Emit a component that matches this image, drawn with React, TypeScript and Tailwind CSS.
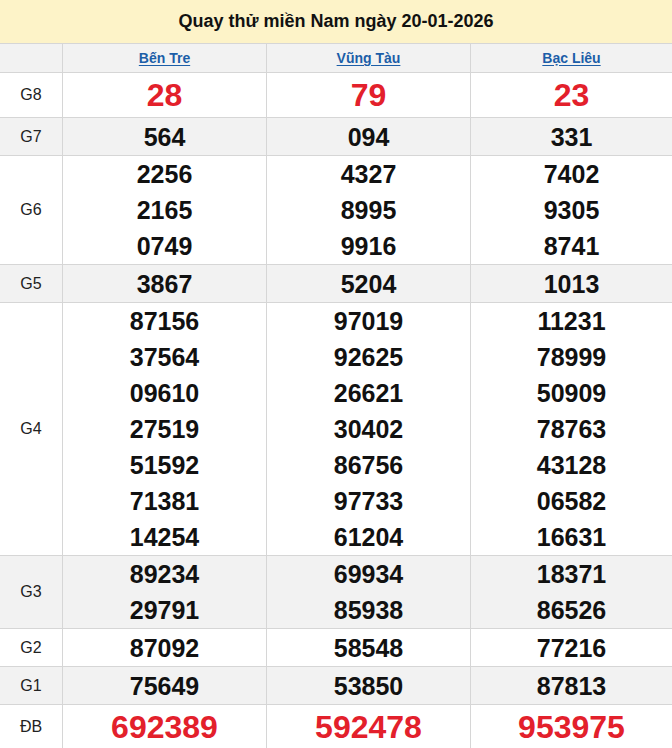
const provinces = ["Bến Tre", "Vũng Tàu", "Bạc Liêu"];

type Prize = {
  label: string;
  values: string[][];
  big?: boolean;
};

const prizes: Prize[] = [
  { label: "G8", values: [["28"], ["79"], ["23"]], big: true },
  { label: "G7", values: [["564"], ["094"], ["331"]] },
  {
    label: "G6",
    values: [
      ["2256", "2165", "0749"],
      ["4327", "8995", "9916"],
      ["7402", "9305", "8741"],
    ],
  },
  { label: "G5", values: [["3867"], ["5204"], ["1013"]] },
  {
    label: "G4",
    values: [
      ["87156", "37564", "09610", "27519", "51592", "71381", "14254"],
      ["97019", "92625", "26621", "30402", "86756", "97733", "61204"],
      ["11231", "78999", "50909", "78763", "43128", "06582", "16631"],
    ],
  },
  {
    label: "G3",
    values: [
      ["89234", "29791"],
      ["69934", "85938"],
      ["18371", "86526"],
    ],
  },
  { label: "G2", values: [["87092"], ["58548"], ["77216"]] },
  { label: "G1", values: [["75649"], ["53850"], ["87813"]] },
  { label: "ĐB", values: [["692389"], ["592478"], ["953975"]], big: true },
];

export default function App() {
  return (
    <div
      className="w-[672px] bg-white text-[#111]"
      style={{ fontFamily: '"Liberation Sans", Arial, sans-serif' }}
    >
      {/* Title */}
      <div className="h-[44px] bg-[#fdf3c8] border-b border-[#d6d6d6] flex items-center justify-center">
        <h2 className="text-[18px] font-bold text-[#111]">
          Quay thử miền Nam ngày 20-01-2026
        </h2>
      </div>

      {/* Provinces */}
      <div className="grid grid-cols-[63px_204px_204px_1fr] bg-[#f2f2f2] border-b border-[#d6d6d6] h-[29px]">
        <div className="border-r border-[#d6d6d6]" />
        {provinces.map((p, i) => (
          <div
            key={p}
            className={`flex items-center justify-center pt-[1px] ${i < 2 ? "border-r border-[#d6d6d6]" : ""}`}
          >
            <a className="text-[14px] font-bold text-[#1c5ea8] underline underline-offset-2">
              {p}
            </a>
          </div>
        ))}
      </div>

      {/* Prize rows */}
      {prizes.map((row, ri) => (
        <div
          key={row.label}
          className={`grid grid-cols-[63px_204px_204px_1fr] border-b border-[#d6d6d6] ${
            ri % 2 === 1 ? "bg-[#f2f2f2]" : "bg-white"
          }`}
        >
          <div className="border-r border-[#d6d6d6] flex items-center justify-center text-[16px] text-[#222]">
            {row.label}
          </div>
          {row.values.map((col, ci) => (
            <div
              key={ci}
              className={`flex flex-col items-center justify-center ${
                row.big ? "min-h-[44px]" : "min-h-[37px]"
              } ${ci < 2 ? "border-r border-[#d6d6d6]" : ""}`}
            >
              {col.map((v) => (
                <span
                  key={v}
                  className={
                    row.big
                      ? "text-[32px] leading-[44px] font-bold text-[#e3202b]"
                      : "text-[25px] leading-[36px] font-bold text-[#111]"
                  }
                >
                  {v}
                </span>
              ))}
            </div>
          ))}
        </div>
      ))}
    </div>
  );
}
